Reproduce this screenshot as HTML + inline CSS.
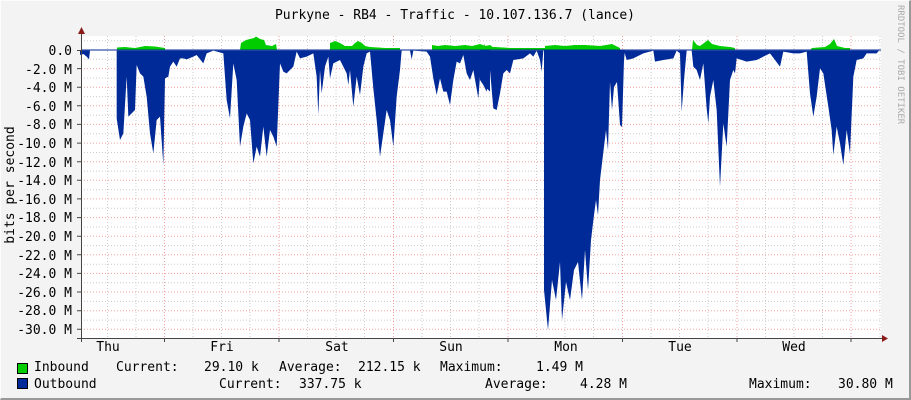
<!DOCTYPE html>
<html><head><meta charset="utf-8"><style>
html,body{margin:0;padding:0}
body{width:911px;height:400px;background:#F3F3F3;position:relative;overflow:hidden;font-family:"DejaVu Sans Mono","Liberation Mono",monospace;font-size:13px;color:#000}
.t{position:absolute;white-space:pre;line-height:14px}
.b{position:absolute;width:9px;height:9px;border:1px solid #000}
</style></head><body>
<div style="position:absolute;left:0;top:0;border-top:1px solid #fcfcfc;border-left:1px solid #fcfcfc;border-right:2px solid #999;border-bottom:2px solid #999;box-sizing:border-box;width:911px;height:400px"></div>
<svg width="911" height="400" style="position:absolute;left:0;top:0">
<rect x="81" y="36" width="800" height="302" fill="#fff"/>
<g stroke="#ccc" stroke-dasharray="1,2" stroke-width="1">
<path d="M81 40.7H881M81 59.3H881M81 78H881M81 96.6H881M81 115.2H881M81 133.8H881M81 152.5H881M81 171.1H881M81 189.7H881M81 208.3H881M81 227H881M81 245.6H881M81 264.2H881M81 282.8H881M81 301.4H881M81 320.1H881"/>
<path d="M107.5 36V338M136 36V338M193 36V338M221.5 36V338M250 36V338M307.5 36V338M336 36V338M364.5 36V338M422 36V338M450.5 36V338M479 36V338M536.5 36V338M565 36V338M593.5 36V338M651 36V338M679.5 36V338M708 36V338M765.5 36V338M794 36V338M822.5 36V338M880 36V338"/>
</g>
<g stroke="#f0a0a0" stroke-dasharray="1,2" stroke-width="1">
<path d="M81 68.6H881M81 87.2H881M81 105.8H881M81 124.4H881M81 143.1H881M81 161.7H881M81 180.3H881M81 198.9H881M81 217.6H881M81 236.2H881M81 254.8H881M81 273.4H881M81 292H881M81 310.7H881M81 329.3H881"/>
<path d="M164.5 36V338M279 36V338M393.5 36V338M508 36V338M622.5 36V338M737 36V338M851 36V338"/>
</g>
<g fill="#00CC00">
<polygon points="117,50 117,47.5 125,47 135,48 145,46 155,46.5 165,48 165,50"/>
<polygon points="240,50 241,43 246,40 250,39 254,38 256,36.5 260,39 264,40 266,45 272,46 276,44 277,50"/>
<polygon points="330,50 330,43 335,41 340,43 345,46 352,46 355,43 358,41 362,43 365,46 370,47 385,48 400,48 400,50"/>
<polygon points="432,50 432,45 438,46 445,45 455,46 465,45 472,46 480,44 485,46 490,45 494,48 510,48 510,50"/>
<polygon points="483,50 484,44 486,47 495,47 510,48 545,48 545,46 555,45 565,46 575,45 585,45 600,46 612,44 616,46 620,48 620,50"/>
<polygon points="692,50 693,40 697,45 700,46 704,43 708,40 712,44 720,46 730,47 735,48 735,50"/>
<polygon points="810,50 812,48 825,47 830,44 834,39 837,46 845,48 850,48 850,50"/>
</g>
<g fill="#002A97">
<polygon transform="translate(80,30) scale(0.33333)" points="0,62 0,75 10,72 20,80 27,88 30,62 110,62 110,265 120,330 130,310 140,140 145,260 150,255 160,245 165,240 170,105 180,130 190,140 200,200 210,310 220,370 230,270 240,260 250,405 255,145 265,140 270,110 280,95 290,110 300,85 310,85 320,88 340,80 350,75 370,100 380,70 400,62 430,70 440,210 450,265 460,100 470,150 480,350 490,290 500,250 510,270 520,400 530,350 540,380 550,290 560,380 570,300 580,320 590,350 600,100 610,125 620,130 640,110 650,65 660,85 680,80 700,70 710,140 715,255 720,120 725,190 735,110 745,80 750,145 760,100 780,90 800,130 805,165 810,120 820,230 830,140 840,195 850,110 860,70 870,65 880,175 890,270 900,380 910,310 920,240 930,270 940,350 950,200 960,120 965,62 990,62 995,88 1000,62 1040,65 1050,80 1060,145 1070,195 1080,145 1090,185 1100,185 1110,225 1120,150 1130,95 1140,100 1150,75 1160,130 1170,150 1180,120 1195,205 1200,140 1215,170 1230,185 1230,62"/>
<polygon transform="translate(480,30) scale(0.33333)" points="0,62 0,150 10,165 20,185 30,120 40,235 50,240 60,190 70,130 80,120 90,130 100,90 130,85 150,70 160,80 170,62 180,90 185,125 190,62"/>
<polygon points="544,50 544,290 548,330 552,280 556,300 560,262 562,320 566,282 570,300 574,270 578,262 582,300 585,250 588,290 591,240 594,215 596,200 598,215 600,180 603,155 606,130 608,150 610,82 612,110 614,87 617,82 620,125 622,127 624,60 625,50"/>
<polygon transform="translate(480,30) scale(0.33333)" points="432,62 440,90 460,85 490,70 520,62 525,95 550,90 580,85 590,62 600,70 605,245 612,150 620,62 635,62 640,110 650,120 660,150 670,100 680,235 685,280 690,200 700,150 710,240 720,470 730,280 740,350 750,150 760,120 765,130 770,85 800,95 830,90 850,80 870,70 900,110 910,65 940,70 960,70 980,65 990,190 1000,260 1010,200 1020,115 1030,130 1045,230 1055,300 1060,375 1070,290 1080,340 1090,405 1100,300 1110,370 1120,140 1130,90 1150,85 1160,70 1190,70 1197,62"/>
</g>
<line x1="81" y1="50" x2="881" y2="50" stroke="#002A97" stroke-width="1"/>
<g stroke="#444" stroke-width="1">
<line x1="81.5" y1="32" x2="81.5" y2="342"/>
<line x1="77" y1="338.5" x2="882" y2="338.5"/>
<path d="M77 50.5H81M77 68.6H81M77 87.2H81M77 105.8H81M77 124.4H81M77 143.1H81M77 161.7H81M77 180.3H81M77 198.9H81M77 217.6H81M77 236.2H81M77 254.8H81M77 273.4H81M77 292H81M77 310.7H81M77 329.3H81"/>
<path d="M164.5 338V342M279 338V342M393.5 338V342M508 338V342M622.5 338V342M737 338V342M851 338V342"/>
</g>
<polygon points="78,34 85,34 81.5,27" fill="#8B1A1A"/>
<polygon points="882,335 882,342 888,338.5" fill="#8B1A1A"/>
<text x="-185" y="14" transform="rotate(-90)" text-anchor="middle" font-family="DejaVu Sans Mono,monospace" font-size="13">bits per second</text>
<text x="5" y="-898" transform="rotate(90)" font-family="DejaVu Sans Mono,monospace" font-size="9" fill="#aaa">RRDTOOL / TOBI OETIKER</text>
<g font-family="DejaVu Sans Mono,monospace" font-size="13" text-anchor="end">
<text x="72" y="55">0.0</text><text x="72" y="74">-2.0 M</text><text x="72" y="92">-4.0 M</text><text x="72" y="111">-6.0 M</text><text x="72" y="129">-8.0 M</text><text x="72" y="148">-10.0 M</text><text x="72" y="167">-12.0 M</text><text x="72" y="185">-14.0 M</text><text x="72" y="204">-16.0 M</text><text x="72" y="222">-18.0 M</text><text x="72" y="241">-20.0 M</text><text x="72" y="260">-22.0 M</text><text x="72" y="278">-24.0 M</text><text x="72" y="297">-26.0 M</text><text x="72" y="315">-28.0 M</text><text x="72" y="334">-30.0 M</text>
</g>
<g font-family="DejaVu Sans Mono,monospace" font-size="13" text-anchor="middle">
<text x="108" y="351">Thu</text><text x="222" y="351">Fri</text><text x="337" y="351">Sat</text><text x="451" y="351">Sun</text><text x="566" y="351">Mon</text><text x="680" y="351">Tue</text><text x="794" y="351">Wed</text>
<text x="455" y="19">Purkyne - RB4 - Traffic - 10.107.136.7 (lance)</text>
</g>
</svg>
<div class="b" style="left:17px;top:363px;background:#00CC00"></div>
<div class="b" style="left:17px;top:378px;background:#002A97"></div>
<div class="t" style="left:34px;top:361px">Inbound</div>
<div class="t" style="left:116px;top:361px">Current:</div>
<div class="t" style="left:204px;top:361px">29.10 k</div>
<div class="t" style="left:279px;top:361px">Average:</div>
<div class="t" style="left:358px;top:361px">212.15 k</div>
<div class="t" style="left:440px;top:361px">Maximum:</div>
<div class="t" style="left:536px;top:361px">1.49 M</div>
<div class="t" style="left:34px;top:378px">Outbound</div>
<div class="t" style="left:219px;top:378px">Current:</div>
<div class="t" style="left:299px;top:378px">337.75 k</div>
<div class="t" style="left:485px;top:378px">Average:</div>
<div class="t" style="left:580px;top:378px">4.28 M</div>
<div class="t" style="left:749px;top:378px">Maximum:</div>
<div class="t" style="left:838px;top:378px">30.80 M</div>
</body></html>
